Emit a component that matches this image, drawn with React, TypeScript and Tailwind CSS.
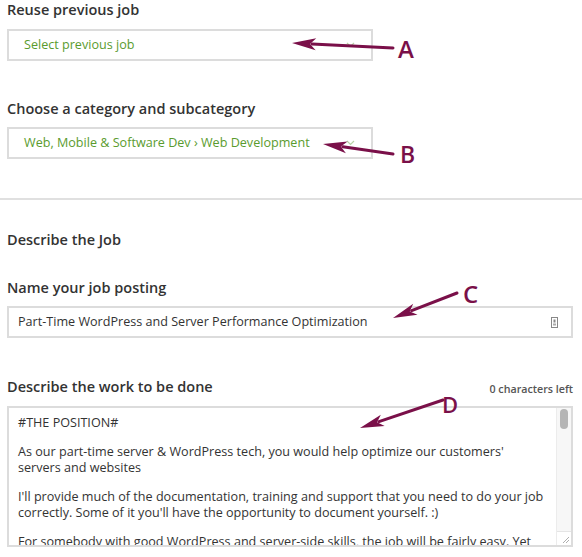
import React from "react";

const FONT = "font-['Open_Sans',_'Noto_Sans',_sans-serif]";

function Chevron({ color }: { color: string }) {
  return (
    <svg width="9" height="6" viewBox="0 0 9 6" fill="none">
      <path d="M1 1 L4.5 4.5 L8 1" stroke={color} strokeWidth="1.2" />
    </svg>
  );
}

function Select({ text }: { text: string }) {
  return (
    <div className="flex h-[32px] w-[366px] items-center justify-between border-2 border-[#dcdcdc] pl-[15px] pr-[16px]">
      <span className="text-[12.6px] leading-[16px] text-[#5a9b2e]">{text}</span>
      <Chevron color="#b8d3a6" />
    </div>
  );
}

function Arrow({ x1, y1, x2, y2 }: { x1: number; y1: number; x2: number; y2: number }) {
  const dx = x2 - x1;
  const dy = y2 - y1;
  const len = Math.sqrt(dx * dx + dy * dy);
  const ux = dx / len;
  const uy = dy / len;
  const hl = 24;
  const hw = 6;
  const bx = x2 - ux * hl;
  const by = y2 - uy * hl;
  const px = -uy;
  const py = ux;
  const pts = `${x2},${y2} ${bx + px * hw},${by + py * hw} ${bx + ux * 6},${by + uy * 6} ${bx - px * hw},${by - py * hw}`;
  return (
    <g>
      <line x1={x1} y1={y1} x2={bx + ux * 4} y2={by + uy * 4} stroke="#7a1049" strokeWidth="3" strokeLinecap="round" />
      <polygon points={pts} fill="#7a1049" />
    </g>
  );
}

export default function App() {
  return (
    <div className={`relative h-[557px] w-[582px] overflow-hidden bg-white ${FONT} text-[#333]`}>
      <div className="px-[7px]">
        <div className="text-[14.5px] font-semibold leading-[20px] text-[#333]">Reuse previous job</div>
        <div className="mt-[9px]">
          <Select text="Select previous job" />
        </div>
        <div className="mt-[38px] text-[14.5px] font-semibold leading-[20px] text-[#333]">
          Choose a category and subcategory
        </div>
        <div className="mt-[8px]">
          <Select text="Web, Mobile & Software Dev › Web Development" />
        </div>
      </div>

      <div className="mt-[39px] h-[2px] w-full bg-[#e0e0e0]" />

      <div className="px-[7px]">
        <div className="mt-[30px] text-[14.5px] font-semibold leading-[20px] text-[#333]">Describe the Job</div>
        <div className="mt-[28px] text-[14.5px] font-semibold leading-[20px] text-[#333]">Name your job posting</div>
        <div className="mt-[8px] flex h-[32px] w-[566px] items-center justify-between border-2 border-[#dcdcdc] pl-[9px] pr-[13px]">
          <span className="text-[12.6px] leading-[16px] text-[#333]">
            Part-Time WordPress and Server Performance Optimization
          </span>
          <svg width="7" height="11" viewBox="0 0 7 11" fill="none">
            <rect x="0.5" y="0.5" width="6" height="10" stroke="#888" />
            <rect x="2.5" y="2.5" width="2" height="3" fill="#888" />
            <rect x="2" y="6.5" width="3" height="2" fill="#aaa" />
          </svg>
        </div>

        <div className="mt-[39px] flex w-[566px] items-end justify-between">
          <div className="text-[14.5px] font-semibold leading-[20px] text-[#333]">Describe the work to be done</div>
          <div className="pb-[1px] text-[10.7px] font-semibold leading-[14px] text-[#555]">0 characters left</div>
        </div>

        <div className="mt-[9px] flex h-[141px] w-[566px] border-2 border-[#dcdcdc]">
          <div className="flex-1 overflow-hidden pl-[9px] pr-[8px] pt-[7px] text-[12.6px] leading-[16px] text-[#333]">
            <p>#THE POSITION#</p>
            <p className="mt-[13px]">
              As our part-time server &amp; WordPress tech, you would help optimize our customers'
              <br />
              servers and websites
            </p>
            <p className="mt-[13px]">
              I'll provide much of the documentation, training and support that you need to do your job
              <br />
              correctly. Some of it you'll have the opportunity to document yourself. :)
            </p>
            <p className="mt-[13px]">
              For somebody with good WordPress and server-side skills, the job will be fairly easy. Yet
              <br />
              it will require attention to detail.
            </p>
          </div>
          <div className="flex w-[15px] flex-col border-l border-[#ececec] bg-[#f7f7f7]">
            <div className="mx-auto mt-[1px] h-[20px] w-[8px] rounded-full bg-[#b5b5b5]" />
            <div className="flex-1" />
            <div className="flex h-[14px] items-end justify-end border-t border-[#e5e5e5] bg-white pb-[1px] pr-[1px]">
              <svg width="8" height="8" viewBox="0 0 8 8">
                <line x1="1" y1="7" x2="7" y2="1" stroke="#999" strokeWidth="0.8" />
                <line x1="4" y1="7" x2="7" y2="4" stroke="#999" strokeWidth="0.8" />
              </svg>
            </div>
          </div>
        </div>
      </div>

      <svg className="pointer-events-none absolute left-0 top-0" width="582" height="557">
        <Arrow x1={393} y1={48} x2={292} y2={43} />
        <Arrow x1={393} y1={154} x2={323} y2={144} />
        <Arrow x1={457} y1={293} x2={393} y2={318} />
        <Arrow x1={443} y1={400} x2={360} y2={428} />
        <g fill="#7a1049" fontFamily="Open Sans, Noto Sans, sans-serif" fontWeight="600">
          <text x="398" y="58" fontSize="24">A</text>
          <text x="400" y="163" fontSize="23">B</text>
          <text x="463" y="303" fontSize="24">C</text>
          <text x="442" y="413" fontSize="22">D</text>
        </g>
      </svg>
    </div>
  );
}
